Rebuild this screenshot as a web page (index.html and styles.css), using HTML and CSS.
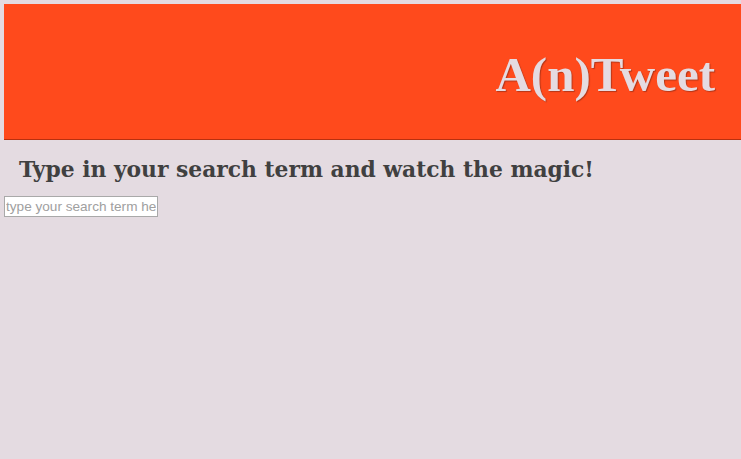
FILE: index.html
```html
<!DOCTYPE html>
<html>
<head>
<meta charset="utf-8">
<link rel="stylesheet" href="styles.css">
</head>
<body>
<header class="banner">
  <h1 class="brand">A(n)Tweet</h1>
</header>
<main class="content">
  <h2 class="lead">Type in your search term and watch the magic!</h2>
  <input class="search" type="text" placeholder="type your search term here">
</main>
</body>
</html>
```
FILE: styles.css
```css
html, body {
  background: #e4dbe1;
}
body {
  margin: 4px 0 0 4px;
  overflow: hidden;
}
.banner {
  background: #ff4a1c;
  border-bottom: 1px solid #b8300f;
  height: 136px;
  box-sizing: border-box;
  display: flex;
  justify-content: flex-end;
  align-items: flex-start;
  padding: 0 26px 0 0;
}
.brand {
  margin: 45px 0 0 0;
  font-family: "Liberation Serif", serif;
  font-weight: bold;
  font-size: 49px;
  line-height: 52px;
  color: #e5dbe1;
  text-shadow: 1px 1px 1px rgba(90, 30, 20, 0.45);
}
.content {
  padding: 0;
}
.lead {
  margin: 16px 0 12px 15px;
  font-family: "DejaVu Serif", serif;
  font-weight: bold;
  font-size: 21.8px;
  line-height: 28px;
  color: #404040;
}
.search {
  display: block;
  width: 154px;
  height: 21px;
  box-sizing: border-box;
  border: 1px solid #a9a9a9;
  padding: 1px 1px;
  margin: 0;
  font-family: "Liberation Sans", Arial, sans-serif;
  font-size: 13.6px;
  background: #fff;
}
.search::placeholder {
  color: #a0a0a0;
}
```
